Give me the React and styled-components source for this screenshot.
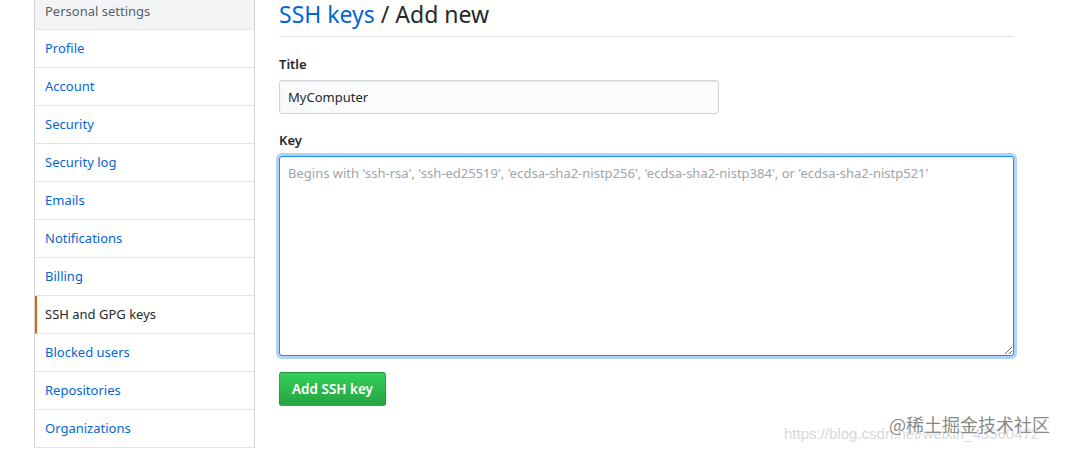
import React from 'react';
import styled, { createGlobalStyle } from 'styled-components';

const FONT = `"Noto Sans", "Liberation Sans", sans-serif`;

const menu = [
  'Profile',
  'Account',
  'Security',
  'Security log',
  'Emails',
  'Notifications',
  'Billing',
  'SSH and GPG keys',
  'Blocked users',
  'Repositories',
  'Organizations',
];

const PLACEHOLDER =
  "Begins with 'ssh-rsa', 'ssh-ed25519', 'ecdsa-sha2-nistp256', 'ecdsa-sha2-nistp384', or 'ecdsa-sha2-nistp521'";

export default function App() {
  return (
    <>
      <GlobalStyle />
      <Page>
        <Sidebar>
          <SidebarHeader>Personal settings</SidebarHeader>
          {menu.map((item) => (
            <MenuItem key={item} selected={item === 'SSH and GPG keys'}>
              {item}
            </MenuItem>
          ))}
        </Sidebar>
        <Main>
          <Heading>
            <HeadingLink>SSH keys</HeadingLink> / Add new
          </Heading>
          <Field>
            <Label>Title</Label>
            <TextInput defaultValue="MyComputer" />
          </Field>
          <Field>
            <Label>Key</Label>
            <KeyArea autoFocus placeholder={PLACEHOLDER} />
          </Field>
          <SubmitButton>Add SSH key</SubmitButton>
        </Main>
      </Page>
      <Watermark>
        <WatermarkUrl>https://blog.csdn.net/weixin_43560472</WatermarkUrl>
        <WatermarkBrand>@稀土掘金技术社区</WatermarkBrand>
      </Watermark>
    </>
  );
}

const GlobalStyle = createGlobalStyle`
  html, body {
    margin: 0;
    padding: 0;
    background: #fff;
    overflow: hidden;
  }
  body {
    font-family: ${FONT};
    font-size: 13px;
    color: #24292e;
  }
`;

const Page = styled.div`
  display: flex;
  align-items: flex-start;
  gap: 24px;
  padding-left: 34px;
  margin-top: -8px;
  height: 458px;
  overflow: hidden;
`;

const Sidebar = styled.nav`
  width: 219px;
  flex-shrink: 0;
  border-left: 1px solid #d1d5da;
  border-right: 1px solid #d1d5da;
`;

const SidebarHeader = styled.div`
  padding: 9px 10px 7px;
  line-height: 21px;
  background: #f3f4f6;
  color: #586069;
  border-bottom: 1px solid #e1e4e8;
`;

const MenuItem = styled.div`
  padding: 8px 10px 8px ${(p) => (p.selected ? '8px' : '10px')};
  line-height: 21px;
  border-bottom: 1px solid #e1e4e8;
  border-left: ${(p) => (p.selected ? '2px solid #e36209' : 'none')};
  color: ${(p) => (p.selected ? '#24292e' : '#0366d6')};
`;

const Main = styled.main`
  width: 735px;
  display: flex;
  flex-direction: column;
  align-items: flex-start;
`;

const Heading = styled.h2`
  align-self: stretch;
  margin: 4px 0 0;
  padding-bottom: 4px;
  font-size: 23px;
  font-weight: 400;
  line-height: 36px;
  border-bottom: 1px solid #e1e4e8;
  color: #24292e;
`;

const HeadingLink = styled.span`
  color: #0366d6;
`;

const Field = styled.div`
  align-self: stretch;
  display: flex;
  flex-direction: column;
  align-items: flex-start;
  margin-top: 16px;
  &:first-of-type {
    margin-top: 17px;
  }
`;

const Label = styled.label`
  font-weight: 600;
  line-height: 21px;
  margin-bottom: 5px;
`;

const TextInput = styled.input`
  box-sizing: border-box;
  width: 440px;
  height: 34px;
  padding: 6px 8px;
  font: 13px ${FONT};
  color: #24292e;
  background: #fafbfc;
  border: 1px solid #d1d5da;
  border-radius: 3px;
  box-shadow: inset 0 1px 2px rgba(27, 31, 35, 0.075);
  outline: none;
`;

const KeyArea = styled.textarea`
  box-sizing: border-box;
  width: 735px;
  height: 200px;
  padding: 6px 8px;
  font: 13px/21px ${FONT};
  color: #24292e;
  background: #fff;
  border: 1px solid #2188ff;
  border-radius: 3px;
  box-shadow: 0 0 0 3px rgba(3, 102, 214, 0.3);
  outline: none;
  resize: vertical;
  &::placeholder {
    color: #a0a4a8;
  }
`;

const SubmitButton = styled.button`
  margin-top: 16px;
  height: 34px;
  padding: 0 12px;
  font: 600 13.5px ${FONT};
  color: #fff;
  background: linear-gradient(-180deg, #34d058 0%, #28a745 90%);
  border: 1px solid rgba(27, 31, 35, 0.2);
  border-radius: 3px;
`;

const Watermark = styled.div`
  position: absolute;
  right: 0;
  bottom: 0;
  width: 290px;
  height: 40px;
  pointer-events: none;
`;

const WatermarkUrl = styled.div`
  position: absolute;
  left: 8px;
  bottom: 8px;
  white-space: nowrap;
  font: 15px "Liberation Sans", sans-serif;
  color: #d8d8d8;
`;

const WatermarkBrand = styled.div`
  position: absolute;
  right: 16px;
  bottom: 13px;
  white-space: nowrap;
  font: 18px "Noto Sans CJK SC", sans-serif;
  color: #8a8a8a;
  text-shadow: 0 0 2px #fff, 0 0 2px #fff;
`;
